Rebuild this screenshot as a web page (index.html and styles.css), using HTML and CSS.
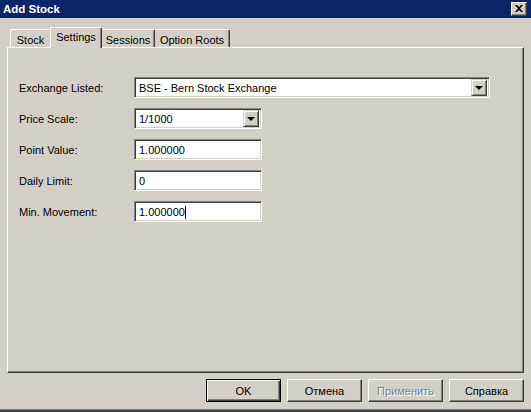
FILE: index.html
```html
<!DOCTYPE html>
<html>
<head>
<meta charset="utf-8">
<link rel="stylesheet" href="styles.css">
</head>
<body>
<div class="window">
  <div class="titlebar">
    <span class="title">Add Stock</span>
    <span class="close"><svg width="8" height="7" viewBox="0 0 8 7"><path d="M0 0h2l2 2 2-2h2L5 3.5 8 7H6L4 5 2 7H0l3-3.5z" fill="#000"/></svg></span>
  </div>
  <div class="tabs">
    <div class="tab t-stock">Stock</div>
    <div class="tab selected t-settings">Settings</div>
    <div class="tab t-sessions">Sessions</div>
    <div class="tab t-roots">Option Roots</div>
  </div>
  <div class="panel">
    <div class="form">
      <div class="label">Exchange Listed:</div>
      <div class="field select wide"><span class="val">BSE - Bern Stock Exchange</span><span class="dd"><i></i></span></div>
      <div class="label">Price Scale:</div>
      <div class="field select"><span class="val">1/1000</span><span class="dd"><i></i></span></div>
      <div class="label">Point Value:</div>
      <div class="field"><span class="val">1.000000</span></div>
      <div class="label">Daily Limit:</div>
      <div class="field"><span class="val">0</span></div>
      <div class="label">Min. Movement:</div>
      <div class="field"><span class="val">1.000000<b class="caret"></b></span></div>
    </div>
  </div>
  <div class="buttons">
    <div class="btn default"><span>OK</span></div>
    <div class="btn"><span>Отмена</span></div>
    <div class="btn disabled"><span>Применить</span></div>
    <div class="btn"><span>Справка</span></div>
  </div>
</div>
</body>
</html>
```
FILE: styles.css
```css
html, body {
  margin: 0;
  padding: 0;
  background: #D4D0C8;
}
.window {
  width: 531px;
  height: 412px;
  box-sizing: border-box;
  background: #D4D0C8;
  border-bottom: 2px solid #404040;
  box-shadow: inset 0 -1px 0 #808080;
  font-family: "Liberation Sans", Arial, sans-serif;
  font-size: 11px;
  color: #000;
  display: flex;
  flex-direction: column;
}
.titlebar {
  height: 18px;
  background: #0A246A;
  display: flex;
  align-items: center;
  justify-content: space-between;
  padding: 0 4px 0 3px;
}
.title {
  color: #fff;
  font-weight: bold;
  font-size: 11.5px;
  line-height: 18px;
}
.close {
  width: 14px;
  height: 12px;
  background: #D4D0C8;
  border: 1px solid;
  border-color: #fff #404040 #404040 #fff;
  box-shadow: inset -1px -1px 0 #808080;
  display: flex;
  align-items: center;
  justify-content: center;
}
.close svg { display: block; margin-top: -1px; margin-left: -1px; }
.tabs {
  display: flex;
  align-items: flex-end;
  height: 20px;
  margin-top: 9px;
  padding-left: 10px;
  position: relative;
  z-index: 1;
}
.tab {
  box-sizing: border-box;
  height: 18px;
  border-top: 1px solid #fff;
  border-left: 1px solid #fff;
  border-right: 1px solid #404040;
  box-shadow: inset -1px 0 0 #808080;
  border-radius: 2px 2px 0 0;
  display: flex;
  align-items: center;
  justify-content: center;
  padding-top: 2px;
}
.t-stock { width: 40px; border-right: none; box-shadow: none; }
.t-settings { width: 52px; }
.t-sessions { width: 53px; border-left: none; }
.t-roots { width: 75px; border-left: none; }
.tab.selected {
  height: 21px;
  margin-bottom: -1px;
  background: #D4D0C8;
  padding-top: 0;
  padding-bottom: 2px;
}
.panel {
  margin: 0 7px;
  height: 326px;
  box-sizing: border-box;
  border: 1px solid;
  border-color: #fff #404040 #404040 #fff;
  box-shadow: inset -1px -1px 0 #808080;
  padding: 29px 0 0 11px;
}
.form {
  display: grid;
  grid-template-columns: 115px auto;
  grid-auto-rows: 21px;
  row-gap: 10px;
  align-items: start;
  justify-items: start;
}
.label {
  height: 21px;
  box-sizing: border-box;
  line-height: 19px;
  padding-top: 2px;
}
.field {
  box-sizing: border-box;
  width: 128px;
  height: 21px;
  background: #fff;
  border: 1px solid;
  border-color: #808080 #fff #fff #808080;
  box-shadow: inset 1px 1px 0 #404040, inset -1px -1px 0 #D4D0C8;
  display: flex;
  align-items: center;
  padding: 2px;
}
.field.wide { width: 356px; }
.val {
  flex: 1;
  padding-left: 2px;
  padding-top: 1px;
  line-height: 15px;
  display: flex;
  align-items: center;
}
.caret {
  display: inline-block;
  width: 1px;
  height: 13px;
  background: #000;
}
.dd {
  box-sizing: border-box;
  width: 16px;
  height: 17px;
  background: #D4D0C8;
  border: 1px solid;
  border-color: #D4D0C8 #404040 #404040 #D4D0C8;
  box-shadow: inset 1px 1px 0 #fff, inset -1px -1px 0 #808080;
  display: flex;
  align-items: center;
  justify-content: center;
}
.dd i {
  width: 0;
  height: 0;
  border-left: 4px solid transparent;
  border-right: 4px solid transparent;
  border-top: 4px solid #000;
  margin-top: 1px;
}
.buttons {
  display: flex;
  justify-content: flex-end;
  gap: 6px;
  margin-top: 6px;
  padding-right: 7px;
}
.btn {
  box-sizing: border-box;
  width: 75px;
  height: 23px;
  border: 1px solid;
  border-color: #fff #404040 #404040 #fff;
  box-shadow: inset -1px -1px 0 #808080;
  display: flex;
  align-items: center;
  justify-content: center;
  padding-top: 1px;
}
.btn.default {
  border: 1px solid #000;
  box-shadow: inset 1px 1px 0 #fff, inset -1px -1px 0 #404040, inset -2px -2px 0 #808080;
}
.btn.disabled span {
  color: #808080;
  text-shadow: 1px 1px 0 #fff;
}
```
